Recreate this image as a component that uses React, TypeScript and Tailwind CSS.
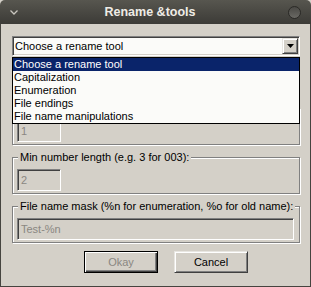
const sunken =
  "border border-t-[#808080] border-l-[#808080] border-b-white border-r-white shadow-[inset_1px_1px_0_#404040,inset_-1px_-1px_0_#d4d0c8]";
const raised =
  "border border-t-[#e8e6e1] border-l-[#e8e6e1] border-b-[#404040] border-r-[#404040] shadow-[inset_1px_1px_0_#ffffff,inset_-1px_-1px_0_#808080]";

const options = [
  "Choose a rename tool",
  "Capitalization",
  "Enumeration",
  "File endings",
  "File name manipulations",
];

const Group = ({ label, value, wide }: { label: string; value: string; wide?: boolean }) => {
  return (
    <div className="border border-[#808080] shadow-[inset_1px_1px_0_#ffffff,1px_1px_0_#ffffff] pl-[4px] pr-[5px] pb-[2px]">
      <div className="-mt-[7px] ml-[1px] w-fit px-[2px] h-[13px] leading-[13px] bg-[#d4d0c8] whitespace-nowrap">
        {label}
      </div>
      <div
        className={`mt-[5px] h-[22px] flex items-center pl-[3px] text-[#8a8782] bg-[#d4d0c8] ${sunken} ${
          wide ? "w-full" : "w-[44px]"
        }`}
      >
        {value}
      </div>
    </div>
  );
};

export default function App() {
  return (
    <div className="w-[311px] h-[287px] flex flex-col font-['Liberation_Sans',Arial,sans-serif] text-[11px] text-black bg-[#d4d0c8]">
      <div className="h-[24px] shrink-0 flex items-center rounded-t-[5px] bg-gradient-to-b from-[#57564f] to-[#3c3b37] pl-[10px] pr-[10px]">
        <svg width="8" height="5" viewBox="0 0 8 5" className="shrink-0">
          <polyline points="0.5,0.5 4,4 7.5,0.5" fill="none" stroke="#c9c6bf" strokeWidth="1.3" />
        </svg>
        <div className="flex-1 text-center pr-[6px] font-bold text-[12.5px] text-[#efece6]">Rename &amp;tools</div>
        <div className="w-[13px] h-[13px] rounded-full border border-[#2a2926] bg-gradient-to-b from-[#4a4945] to-[#6a6964] shrink-0" />
      </div>

      <div className="flex-1 border-x border-b border-[#45443f] pl-[11px] pr-[10px] flex flex-col">
        <div className="relative mt-[12px]">
          <div className={`h-[20px] p-[1px] flex bg-[#fbfbf9] ${sunken}`}>
            <div className="flex-1 pl-[1px] leading-[16px]">Choose a rename tool</div>
            <div className={`w-[16px] h-[16px] bg-[#d4d0c8] flex items-center justify-center ${raised}`}>
              <svg width="7" height="4" viewBox="0 0 7 4">
                <polygon points="0,0 7,0 3.5,4" fill="#000" />
              </svg>
            </div>
          </div>
          {/* open dropdown list, covers the first group */}
          <div className="absolute left-0 right-0 top-[21px] z-10 border border-black bg-[#fbfbf9]">
            {options.map((o, i) => (
              <div
                key={o}
                className={`h-[13px] leading-[13px] pl-[1px] ${i === 0 ? "bg-[#0a246a] text-white" : ""}`}
              >
                {o}
              </div>
            ))}
          </div>
        </div>

        <div className="mt-[52px] flex flex-col gap-[12px]">
          <Group label="" value="1" />
          <Group label="Min number length (e.g. 3 for 003):" value="2" />
          <Group label="File name mask (%n for enumeration, %o for old name):" value="Test-%n" wide />
        </div>

        <div className="mt-[8px] flex gap-[16px] pl-[72px]">
          <button className="w-[74px] h-[22px] bg-[#d4d0c8] text-[#8a8782] border border-black shadow-[inset_1px_1px_0_#ffffff,inset_-1px_-1px_0_#404040,inset_-2px_-2px_0_#808080]">
            Okay
          </button>
          <button className={`w-[74px] h-[22px] bg-[#d4d0c8] ${raised}`}>Cancel</button>
        </div>
      </div>
    </div>
  );
}
